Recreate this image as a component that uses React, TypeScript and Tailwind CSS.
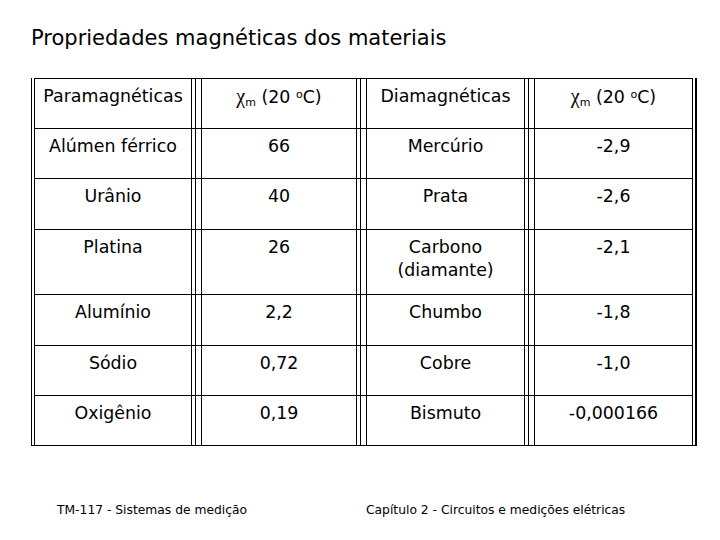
import React from "react";

type Row = { h: string; cells: React.ReactNode[] };

const Chi = () => (
  <span>
    <span className="font-['Liberation_Serif',serif] text-[20px]">χ</span>
    <sub className="text-[11px]">m</sub> (20 <sup className="text-[11px]">o</sup>C)
  </span>
);

const rows: Row[] = [
  { h: "h-[50px]", cells: ["Paramagnéticas", <Chi key="a" />, "Diamagnéticas", <Chi key="b" />] },
  { h: "h-[50px]", cells: ["Alúmen férrico", "66", "Mercúrio", "-2,9"] },
  { h: "h-[51px]", cells: ["Urânio", "40", "Prata", "-2,6"] },
  {
    h: "h-[65px]",
    cells: [
      "Platina",
      "26",
      <span key="c">
        Carbono
        <br />
        (diamante)
      </span>,
      "-2,1",
    ],
  },
  { h: "h-[51px]", cells: ["Alumínio", "2,2", "Chumbo", "-1,8"] },
  { h: "h-[50px]", cells: ["Sódio", "0,72", "Cobre", "-1,0"] },
  { h: "h-[50px]", cells: ["Oxigênio", "0,19", "Bismuto", "-0,000166"] },
];

const Sep = () => (
  <div className="ml-[3px] w-[7px] shrink-0 border-x border-black" />
);

const Cell = ({ w, left, children }: { w: string; left?: boolean; children: React.ReactNode }) => (
  <div
    className={`${w} shrink-0 border-r border-black ${left ? "border-l" : ""} pt-[6px] text-center leading-[23px]`}
  >
    {children}
  </div>
);

export default function App() {
  return (
    <div className="w-[720px] h-[540px] bg-white text-black font-['DejaVu_Sans',sans-serif] overflow-hidden">
      <div className="pt-[26px] pl-[31px] text-[21px] leading-[24px] whitespace-nowrap">
        Propriedades magnéticas dos materiais
      </div>
      <div className="mt-[28px] ml-[31px] w-[666px] border-l border-b border-r-2 border-black pl-[2px] pr-[2px] text-[17.4px]">
        {rows.map((r, i) => (
          <div key={i} className={`${r.h} flex border-t border-black whitespace-nowrap`}>
            <Cell w="w-[158px]" left>
              {r.cells[0]}
            </Cell>
            <Sep />
            <Cell w="w-[155px]">{r.cells[1]}</Cell>
            <Sep />
            <Cell w="w-[158px]">{r.cells[2]}</Cell>
            <Sep />
            <Cell w="w-[158px]">{r.cells[3]}</Cell>
          </div>
        ))}
      </div>
      <div className="mt-[56px] flex pl-[57px] text-[12.3px] leading-[16px] whitespace-nowrap">
        <span className="w-[309px] shrink-0">TM-117 - Sistemas de medição</span>
        <span>Capítulo 2 - Circuitos e medições elétricas</span>
      </div>
    </div>
  );
}
